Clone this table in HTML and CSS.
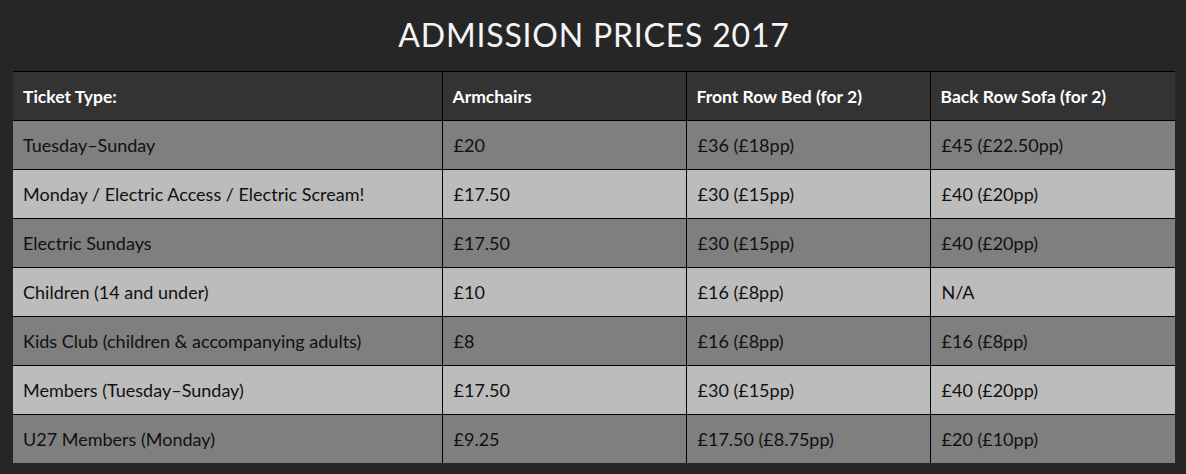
FILE: index.html
```html
<!DOCTYPE html>
<html lang="en">
<head>
<meta charset="utf-8">
<title>Admission Prices 2017</title>
<link rel="stylesheet" href="styles.css">
</head>
<body>
<div class="page">
  <h1 class="title">ADMISSION PRICES 2017</h1>
  <table class="prices">
    <thead>
      <tr>
        <th class="c1">Ticket Type:</th>
        <th class="c2">Armchairs</th>
        <th class="c3">Front Row Bed (for 2)</th>
        <th class="c4">Back Row Sofa (for 2)</th>
      </tr>
    </thead>
    <tbody>
      <tr class="dark"><td>Tuesday–Sunday</td><td>£20</td><td>£36 (£18pp)</td><td>£45 (£22.50pp)</td></tr>
      <tr class="light"><td>Monday / Electric Access / Electric Scream!</td><td>£17.50</td><td>£30 (£15pp)</td><td>£40 (£20pp)</td></tr>
      <tr class="dark"><td>Electric Sundays</td><td>£17.50</td><td>£30 (£15pp)</td><td>£40 (£20pp)</td></tr>
      <tr class="light"><td>Children (14 and under)</td><td>£10</td><td>£16 (£8pp)</td><td>N/A</td></tr>
      <tr class="dark"><td>Kids Club (children &amp; accompanying adults)</td><td>£8</td><td>£16 (£8pp)</td><td>£16 (£8pp)</td></tr>
      <tr class="light"><td>Members (Tuesday–Sunday)</td><td>£17.50</td><td>£30 (£15pp)</td><td>£40 (£20pp)</td></tr>
      <tr class="dark last"><td>U27 Members (Monday)</td><td>£9.25</td><td>£17.50 (£8.75pp)</td><td>£20 (£10pp)</td></tr>
    </tbody>
  </table>
</div>
</body>
</html>
```
FILE: styles.css
```css
html, body {
  margin: 0;
  padding: 0;
}
body {
  background: #262626;
  font-family: Lato, "Noto Sans", sans-serif;
  width: 1186px;
  height: 474px;
  overflow: hidden;
}
.page {
  padding: 0 11px 0 13px;
}
.title {
  margin: 0;
  height: 71px;
  box-sizing: border-box;
  padding-top: 17px;
  text-align: center;
  color: #f4f4f4;
  font-weight: 400;
  font-size: 32px;
  line-height: 36px;
  letter-spacing: 0.8px;
}
.prices {
  width: 1162px;
  border-collapse: collapse;
  border-top: 1px solid #000;
  table-layout: fixed;
}
.prices th, .prices td {
  height: 48px;
  padding: 0 10px;
  text-align: left;
  vertical-align: middle;
  font-size: 18px;
  border-bottom: 1px solid #000;
  border-left: 1px solid #000;
  box-sizing: border-box;
}
.prices th:first-child, .prices td:first-child {
  border-left: none;
}
.prices th {
  background: #333333;
  color: #ffffff;
  font-weight: 700;
  font-size: 17.5px;
  height: 49px;
}
.c1 { width: 429px; }
.c2 { width: 244px; }
.c3 { width: 244px; }
.c4 { width: 245px; }
.prices td {
  color: #111;
  height: 49px;
}
.prices td + td { padding-left: 11px; }
.dark td { background: #7f7f7f; }
.light td { background: #bcbcbc; }
.last td { border-bottom: none; height: 48px; }
```
